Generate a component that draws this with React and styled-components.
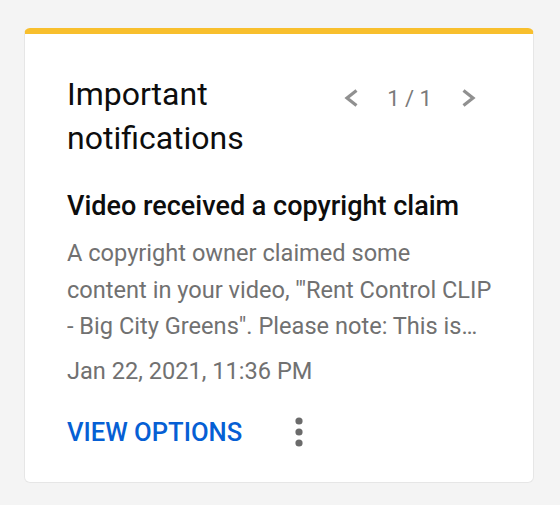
import React from 'react';
import styled, { createGlobalStyle } from 'styled-components';

const GlobalStyle = createGlobalStyle`
  body {
    margin: 0;
    background: #f4f4f4;
    font-family: Roboto, "Noto Sans", "Liberation Sans", sans-serif;
  }
`;

const Page = styled.div`
  padding-top: 28px;
  padding-left: 24px;
  padding-bottom: 24px;
`;

const Card = styled.section`
  box-sizing: border-box;
  width: 510px;
  background: white;
  border: 1px solid #e6e6e6;
  border-top: 6px solid #f8bf2d;
  border-radius: 6px;
  padding: 38px 39px 30px 42px;
`;

const Header = styled.div`
  display: flex;
  align-items: flex-start;
`;

const Title = styled.h2`
  flex: 1;
  margin: 0;
  font-size: 32px;
  line-height: 44px;
  font-weight: 400;
  color: #0d0d0d;
`;

const Pager = styled.div`
  display: flex;
  align-items: center;
  margin-top: 6px;
  margin-right: 5px;
`;

const IconButton = styled.button`
  display: flex;
  align-items: center;
  justify-content: center;
  width: 40px;
  height: 40px;
  padding: 0;
  border: none;
  background: none;
  cursor: pointer;
  color: ${(props) => props.color || '#909090'};
`;

const Count = styled.span`
  margin: 0 17px 0 16px;
  font-size: 22px;
  color: #7a7a7a;
`;

const Subtitle = styled.h3`
  margin: 28px 0 0;
  font-size: 27px;
  line-height: 36px;
  font-weight: 500;
  color: #0d0d0d;
`;

const Body = styled.p`
  margin: 11px 0 0;
  font-size: 23.6px;
  line-height: 36.6px;
  color: #717171;
  display: -webkit-box;
  -webkit-line-clamp: 3;
  -webkit-box-orient: vertical;
  overflow: hidden;
`;

const Date = styled.div`
  margin-top: 8px;
  font-size: 23.6px;
  line-height: 36.6px;
  color: #717171;
`;

const Actions = styled.div`
  display: flex;
  align-items: center;
  margin-top: 23px;
`;

const TextButton = styled.button`
  padding: 0;
  border: none;
  background: none;
  font-family: inherit;
  font-size: 25.6px;
  line-height: 36.6px;
  font-weight: 500;
  text-transform: uppercase;
  color: #065fd4;
  cursor: pointer;
`;

const MenuButton = styled(IconButton)`
  margin-left: 37px;
`;

const Chevron = ({ dir }) => (
  <svg width="16" height="18" viewBox="0 0 16 18">
    <polyline
      points={dir === 'left' ? '13.5,1.5 4,9 13.5,16.5' : '2.5,1.5 12,9 2.5,16.5'}
      fill="none"
      stroke="currentColor"
      strokeWidth="3.2"
    />
  </svg>
);

const Dots = () => (
  <svg width="8" height="30" viewBox="0 0 8 30">
    <circle cx="4" cy="4" r="3.6" fill="currentColor" />
    <circle cx="4" cy="15" r="3.6" fill="currentColor" />
    <circle cx="4" cy="26" r="3.6" fill="currentColor" />
  </svg>
);

export default function App() {
  return (
    <>
      <GlobalStyle />
      <Page>
        <Card>
          <Header>
            <Title>Important notifications</Title>
            <Pager>
              <IconButton aria-label="Previous"><Chevron dir="left" /></IconButton>
              <Count>1 / 1</Count>
              <IconButton aria-label="Next"><Chevron dir="right" /></IconButton>
            </Pager>
          </Header>
          <Subtitle>Video received a copyright claim</Subtitle>
          <Body>
            A copyright owner claimed some content in your video, '"Rent Control CLIP - Big City Greens". Please note: This is not a copyright strike and does not affect your channel.
          </Body>
          <Date>Jan 22, 2021, 11:36 PM</Date>
          <Actions>
            <TextButton>View options</TextButton>
            <MenuButton color="#6b6b6b" aria-label="More"><Dots /></MenuButton>
          </Actions>
        </Card>
      </Page>
    </>
  );
}
